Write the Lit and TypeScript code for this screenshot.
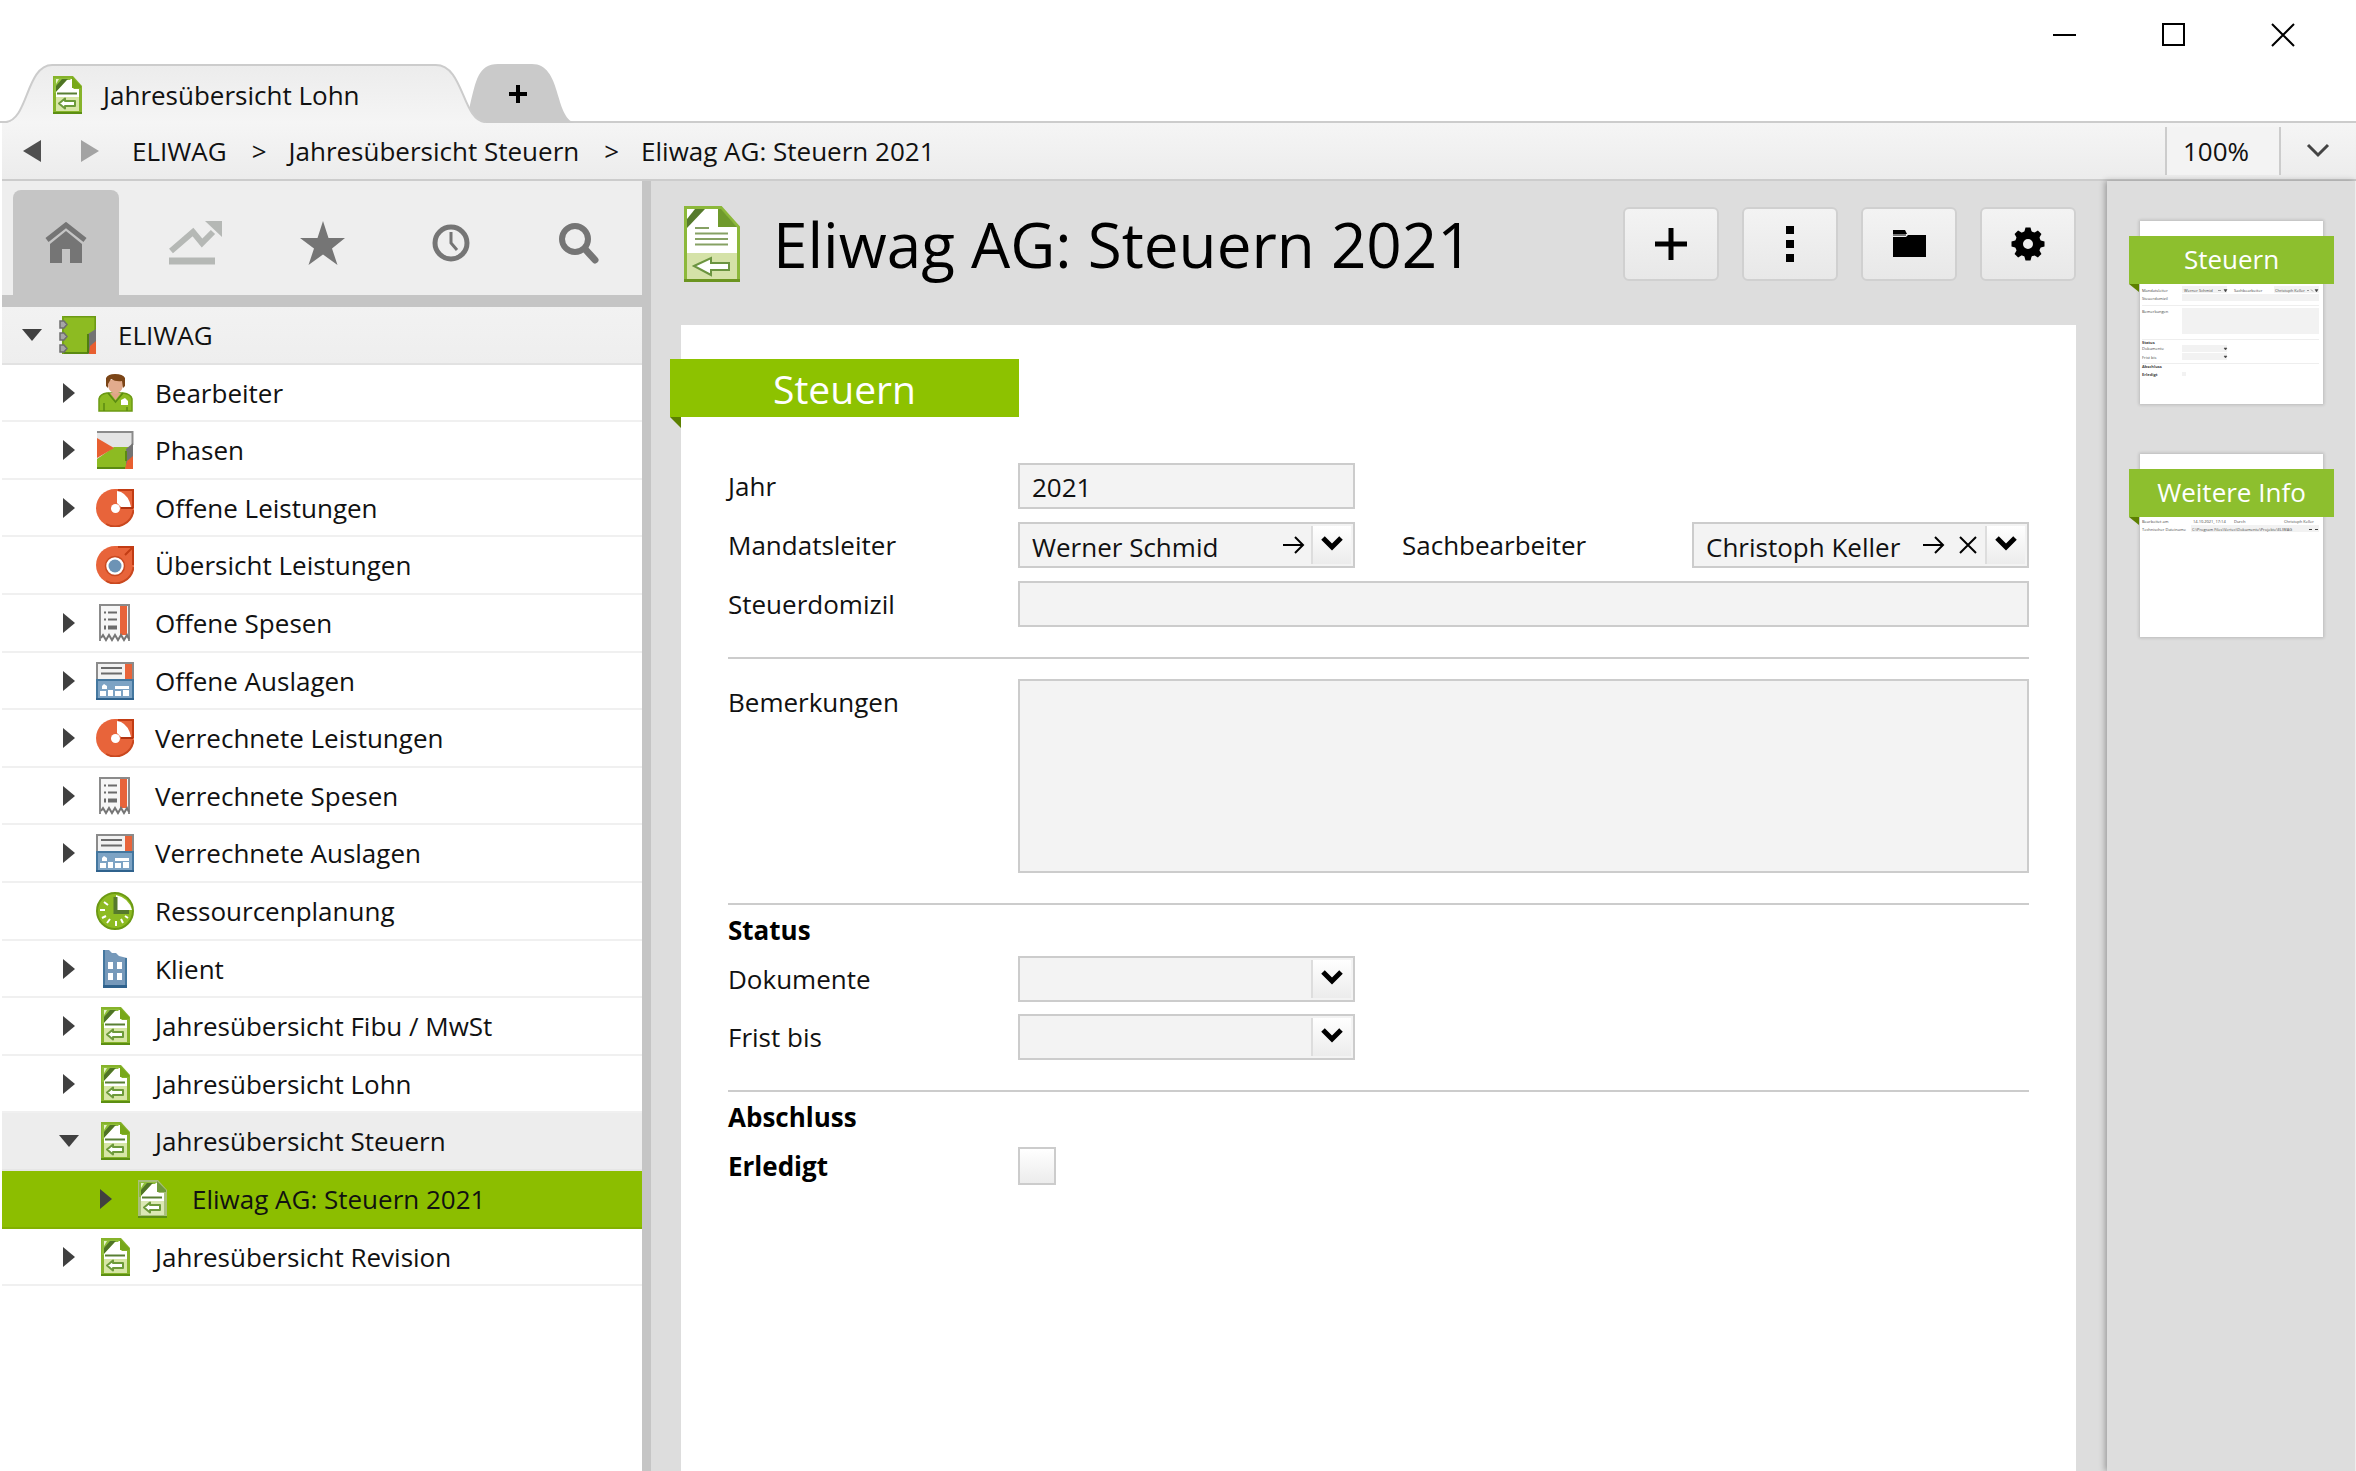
import { LitElement, html, css, svg, nothing } from "lit";
import type { TemplateResult } from "lit";
import { customElement, property, state } from "lit/decorators.js";
import { classMap } from "lit/directives/class-map.js";

type IconName =
  | "notebook" | "person" | "phases" | "pie" | "target" | "receipt"
  | "expense" | "clock" | "building" | "doc" | "docPale";

interface TreeNode {
  id: string;
  label: string;
  icon: IconName;
  level: number;
  arrow: "open" | "closed" | "none";
}

const smallDoc = (edge: string, fold: string, tint: string) => svg`
  <path d="M5 0H25L34 10V38H5Z" fill="${edge}"/>
  <path d="M8 3H24V11L26 13H31V35H8Z" fill="#fff"/>
  <path d="M8 21H31V35H8Z" fill="${tint}"/>
  <path d="M6 2H23V3L8 17H6Z" fill="#8fbf3a"/>
  <path d="M8 3H11L8 8Z" fill="#e6f2c8"/>
  <path d="M14 3H20L8 16V10Z" fill="#4f7426"/>
  <path d="M19 4H24V13H31V19H8V16Z" fill="#fff"/>
  <path d="M24 1L33 10V12H24Z" fill="${fold}"/>
  <path d="M9 17.500H29" stroke="#587f33" stroke-width="2"/>
  <path d="M11 27.500L17 22.500V25H27V30H17V32.500Z" fill="#fff" stroke="#6d9a3a" stroke-width="2" stroke-linejoin="round"/>
  <path d="M5 37H34" stroke="#5c8f12" stroke-width="2"/>`;

const ICONS: Record<IconName, TemplateResult> = {
  notebook: svg`
    <rect x="3" y="0" width="34" height="38" fill="#8dbb22"/>
    <path d="M3 .8H36.200V14" fill="none" stroke="#6c9a14" stroke-width="1.600"/>
    <path d="M4 37H30" stroke="#5b8a12" stroke-width="2"/>
    <path d="M4 0V38" stroke="#76a41a" stroke-width="2"/>
    <path d="M37 13L29 18V38H31L37 26Z" fill="#737373"/>
    <path d="M29 18V37" stroke="#4f7d10" stroke-width="2"/>
    <path d="M31 30L37 25V38H30Z" fill="#e85f30"/>
    <g fill="#a6a6a6" stroke="#6d6d6d" stroke-width="1.500">
      <path d="M1 5H5L8 8.500L5 12H1Z"/><path d="M1 17H5L8 20.500L5 24H1Z"/><path d="M1 29H5L8 32.500L5 36H1Z"/>
    </g>`,
  person: svg`
    <path d="M3 37V25Q4 20 11 19H27Q35 20 36 25V37Z" fill="#8dbb22" stroke="#6c9a14" stroke-width="1.500"/>
    <path d="M14 19L19.500 26L25 19Z" fill="#dfa587"/>
    <path d="M12 19L19.500 28L27 19" fill="none" stroke="#5b8a12" stroke-width="1.500"/>
    <path d="M8 29V37M31 33V37" stroke="#5b8a12" stroke-width="1.500"/>
    <path d="M12 6H27V12Q26 18 19.500 20Q13 18 12 12Z" fill="#e2ab8d"/>
    <path d="M10 12V4Q12 0 19 0Q27 0 29 4V12L27 14L26 7Q20 8 15 5L12 10V14Z" fill="#7b4517"/>
    <path d="M25 26L29 24L32 27V31H25Z" fill="#fff"/>`,
  phases: svg`
    <rect x="1" y="1" width="36" height="36" fill="#e4e4e4"/>
    <path d="M1 1H36.500V14" fill="none" stroke="#8b8b8b" stroke-width="2"/>
    <path d="M1 28L18 16H34V38H1Z" fill="#8dbb22"/>
    <path d="M1 7L18 17L1 27Z" fill="#e85f30"/>
    <path d="M37 12L30 18V38L37 26Z" fill="#737373"/>
    <path d="M31 30L37 25V38H29Z" fill="#e85f30"/>
    <path d="M1 37H29M30 20V30" stroke="#5b8a12" stroke-width="2"/>`,
  pie: svg`
    <path d="M19 0H38V19A19 19 0 1 1 19 0Z" fill="#e8643a"/>
    <path d="M22 1H37V19" fill="none" stroke="#c23c14" stroke-width="2"/>
    <path d="M37.500 21A18.500 18.500 0 0 1 10 35" fill="none" stroke="#c9481f" stroke-width="2"/>
    <path d="M21 2L25 3Q33 7 35 18H25L21 14Z" fill="#fff"/>
    <path d="M25 19H37" stroke="#b23410" stroke-width="2"/>
    <circle cx="19.500" cy="19.500" r="4.500" fill="#fff"/>`,
  target: svg`
    <path d="M19 0H38V19A19 19 0 1 1 19 0Z" fill="#e8643a"/>
    <path d="M22 1H37V19M29 9L36 2" fill="none" stroke="#c23c14" stroke-width="2"/>
    <path d="M37.500 21A18.500 18.500 0 0 1 10 35" fill="none" stroke="#c9481f" stroke-width="2"/>
    <circle cx="19" cy="20" r="9.500" fill="#fff" stroke="#c9481f" stroke-width="1.500"/>
    <circle cx="19" cy="20" r="6.500" fill="#6d93b5"/>`,
  receipt: svg`
    <path d="M4 1H33V37L30 32L27 37L24 32L21 37L18 32L15 37L12 32L9 37L6 32L4 37Z" fill="#f6f6f6"/>
    <path d="M4 37V1H33V37" fill="none" stroke="#8b8b8b" stroke-width="2"/>
    <path d="M24 2H31V31H24Z" fill="#e8643a"/>
    <path d="M5 34L7 31L10 36L13 31L16 36L19 31L22 36L25 31L28 36L31 31L33 35" fill="none" stroke="#757575" stroke-width="2"/>
    <path d="M8 8.500H10M12 8.500H21M8 15.500H10M12 15.500H21" stroke="#6b6b6b" stroke-width="2"/>
    <path d="M8 23.500H10M12 23.500H21" stroke="#6b6b6b" stroke-width="4"/>`,
  expense: svg`
    <rect x="1" y="1" width="36" height="17" fill="#f2f2f2" stroke="#8b8b8b" stroke-width="2"/>
    <rect x="29" y="2" width="7" height="15" fill="#e8643a"/>
    <path d="M5 6H26M5 11.500H26" stroke="#6b6b6b" stroke-width="2"/>
    <rect x="1" y="18" width="36" height="19" fill="#7da3c4" stroke="#44779f" stroke-width="2"/>
    <path d="M0 37H38" stroke="#2f628d" stroke-width="2"/>
    <path d="M6 24L8 22L11 24V27H6ZM19 24H33V27H19ZM4 29H10V34H4ZM12 28H17V34H12ZM19 29H25V34H19ZM27 28H33V34H27Z" fill="#fff"/>`,
  clock: svg`
    <circle cx="19" cy="19" r="18" fill="#8dbb22" stroke="#6c9a14" stroke-width="2"/>
    <path d="M20 3Q33 6 36 18H20Z" fill="#fff"/>
    <path d="M19.500 5V20H33" fill="none" stroke="#567a2c" stroke-width="4"/>
    <path d="M20 34V29M27 31L25 27M11 31L14 27M6 26L10 24M4 18H9M8 10L12 13M32 26L29 24" stroke="#fff" stroke-width="2"/>`,
  building: svg`
    <path d="M7 0H13L16 3L20 3L23 6L31 8V37H7Z" fill="#7699ba"/>
    <path d="M8 0V37M30 8V37" stroke="#44779f" stroke-width="2"/>
    <path d="M7 36.500H31" stroke="#2f628d" stroke-width="3"/>
    <path d="M12 12H17V19H12ZM21 12H26V19H21ZM12 23H17V30H12ZM21 23H26V30H21Z" fill="#fff"/>`,
  doc: smallDoc("#86b32a", "#78a81a", "#d7e6a6"),
  docPale: smallDoc("#a9bf7c", "#6f9a3a", "#dbe8b4"),
};

const TREE: TreeNode[] = [
  { id: "root", label: "ELIWAG", icon: "notebook", level: 0, arrow: "open" },
  { id: "bearbeiter", label: "Bearbeiter", icon: "person", level: 1, arrow: "closed" },
  { id: "phasen", label: "Phasen", icon: "phases", level: 1, arrow: "closed" },
  { id: "o-leist", label: "Offene Leistungen", icon: "pie", level: 1, arrow: "closed" },
  { id: "u-leist", label: "Übersicht Leistungen", icon: "target", level: 1, arrow: "none" },
  { id: "o-spesen", label: "Offene Spesen", icon: "receipt", level: 1, arrow: "closed" },
  { id: "o-ausl", label: "Offene Auslagen", icon: "expense", level: 1, arrow: "closed" },
  { id: "v-leist", label: "Verrechnete Leistungen", icon: "pie", level: 1, arrow: "closed" },
  { id: "v-spesen", label: "Verrechnete Spesen", icon: "receipt", level: 1, arrow: "closed" },
  { id: "v-ausl", label: "Verrechnete Auslagen", icon: "expense", level: 1, arrow: "closed" },
  { id: "ressourcen", label: "Ressourcenplanung", icon: "clock", level: 1, arrow: "none" },
  { id: "klient", label: "Klient", icon: "building", level: 1, arrow: "closed" },
  { id: "j-fibu", label: "Jahresübersicht Fibu / MwSt", icon: "doc", level: 1, arrow: "closed" },
  { id: "j-lohn", label: "Jahresübersicht Lohn", icon: "doc", level: 1, arrow: "closed" },
  { id: "j-steuern", label: "Jahresübersicht Steuern", icon: "doc", level: 1, arrow: "open" },
  { id: "steuern-2021", label: "Eliwag AG: Steuern 2021", icon: "docPale", level: 2, arrow: "closed" },
  { id: "j-revision", label: "Jahresübersicht Revision", icon: "doc", level: 1, arrow: "closed" },
];

const shared = css`
  :host {
    box-sizing: border-box;
    font-family: "Open Sans", "Noto Sans", "Liberation Sans", sans-serif;
    font-size: 26px;
    line-height: 38px;
    color: #111;
  }
  *, *::before, *::after { box-sizing: border-box; }
  button, input, select, textarea {
    margin: 0;
    padding: 0;
    border: 0;
    border-radius: 0;
    background: none;
    font: inherit;
    color: inherit;
  }
  button { display: flex; align-items: center; justify-content: center; }
  a { color: inherit; text-decoration: none; }
  svg { display: block; flex: none; }
`;

@customElement("app-titlebar")
export class AppTitlebar extends LitElement {
  static styles = [shared, css`
    :host { display: flex; justify-content: space-between; height: 123px; padding-left: 2px; background: #fff; border-bottom: 2px solid #ccc; }
    .tabs { display: flex; align-items: flex-end; }
    .tab { position: relative; display: flex; height: 60px; margin-bottom: -2px; }
    .shape { position: absolute; inset: 0; width: 100%; height: 100%; }
    .active { z-index: 1; width: 484px; }
    .active button { position: relative; gap: 17px; padding: 4px 0 0 46px; }
    .add { width: 112px; margin-left: -20px; }
    .add button { position: relative; width: 100%; padding: 2px 8px 0 0; }
    .win { display: flex; align-items: flex-start; padding-right: 19px; }
    .win button { width: 109px; height: 70px; }
  `];

  render() {
    return html`
      <div class="tabs">
        <div class="tab active">
          <svg class="shape" viewBox="0 0 482 60" preserveAspectRatio="none" aria-hidden="true">
            <defs><linearGradient id="tabfill" x1="0" y1="0" x2="0" y2="1"><stop offset="0" stop-color="#ececec"/><stop offset="1" stop-color="#f5f5f5"/></linearGradient></defs>
            <path d="M4 60C26 57 24 2 50 2H432C460 2 458 57 482 60Z" fill="url(#tabfill)"/>
            <path d="M0 59H4C26 57 24 2 50 2H432C460 2 458 57 481 59" fill="none" stroke="#ccc" stroke-width="2"/>
          </svg>
          <button type="button" aria-current="page">
            <svg width="38" height="38" viewBox="0 0 38 38" aria-hidden="true">${ICONS.doc}</svg>
            Jahresübersicht Lohn
          </button>
        </div>
        <div class="tab add">
          <svg class="shape" viewBox="0 0 112 60" preserveAspectRatio="none" aria-hidden="true">
            <path d="M0 60L4 42C10 18 12 1 32 1H66C96 1 88 54 109 60Z" fill="#cacaca"/>
          </svg>
          <button type="button" aria-label="Neuer Tab">
            <svg width="20" height="20" viewBox="0 0 20 20" aria-hidden="true"><path d="M10 1V19M1 10H19" stroke="#000" stroke-width="4"/></svg>
          </button>
        </div>
      </div>
      <div class="win">
        <button type="button" aria-label="Minimieren"><svg width="24" height="24" viewBox="0 0 24 24"><path d="M0 12H23" stroke="#000" stroke-width="2"/></svg></button>
        <button type="button" aria-label="Maximieren"><svg width="24" height="24" viewBox="0 0 24 24"><path d="M1 1H22V22H1Z" fill="none" stroke="#000" stroke-width="2"/></svg></button>
        <button type="button" aria-label="Schliessen"><svg width="24" height="24" viewBox="0 0 24 24"><path d="M1 1L23 23M23 1L1 23" stroke="#000" stroke-width="2"/></svg></button>
      </div>`;
  }
}

@customElement("app-breadcrumb")
export class AppBreadcrumb extends LitElement {
  static styles = [shared, css`
    :host { display: flex; align-items: center; height: 58px; margin-left: 2px; background: linear-gradient(#f5f5f5, #ececec); border-bottom: 2px solid #ccc; }
    .arrow { width: 58px; height: 56px; }
    .trail { display: flex; flex: 1; gap: 25px; margin: 0; padding: 0 0 0 14px; list-style: none; }
    .trail li { display: flex; gap: 22px; }
    .zoom { width: 116px; height: 48px; padding-left: 16px; background: #f3f3f3; border: solid #ccc; border-width: 0 2px; }
    .more { width: 75px; height: 56px; padding-right: 2px; }
  `];

  render() {
    const trail = ["ELIWAG", "Jahresübersicht Steuern", "Eliwag AG: Steuern 2021"];
    return html`
      <button class="arrow" type="button" aria-label="Zurück"><svg width="20" height="24" viewBox="0 0 20 24"><path d="M20 1V23L2 12Z" fill="#505050"/></svg></button>
      <button class="arrow" type="button" aria-label="Vorwärts"><svg width="20" height="24" viewBox="0 0 20 24"><path d="M2 1V23L20 12Z" fill="#a3a3a3"/></svg></button>
      <ol class="trail">
        ${trail.map((t, i) => html`<li>${i ? html`<span aria-hidden="true">&gt;</span>` : nothing}<a href="#">${t}</a></li>`)}
      </ol>
      <input class="zoom" type="text" aria-label="Zoom" .value=${"100%"} />
      <button class="more" type="button" aria-label="Zoomstufe wählen"><svg width="24" height="18" viewBox="0 0 24 18"><path d="M2 3L12 13L22 3" fill="none" stroke="#444" stroke-width="3"/></svg></button>`;
  }
}

@customElement("app-sidebar")
export class AppSidebar extends LitElement {
  @state() private selected = "steuern-2021";

  static styles = [shared, css`
    :host { display: block; background: #fff; }
    .tools { display: grid; grid-template-columns: repeat(5, 1fr); justify-items: center; height: 126px; padding-top: 9px; background: #eee; border-bottom: 12px solid #c5c5c5; }
    .tools button { width: 106px; height: 105px; border-radius: 8px 8px 0 0; }
    .tools .on { background: #c5c5c5; }
    .tree { display: grid; grid-auto-rows: 58px 57px 58px 57px 58px; margin: 0; padding: 0; list-style: none; }
    .row { display: flex; align-items: center; padding: 0 11px; border-bottom: 2px solid #f0f0f0; }
    .row.l1 { padding-left: 48px; }
    .row.l2 { padding-left: 85px; }
    .row.l0 { background: linear-gradient(#f2f2f2, #eee); border-color: #e2e2e2; }
    .row.path { background: #ededed; border-color: #e6e6e6; }
    .row.sel { background: #8cbe00; border-color: #82b000; }
    .twist { width: 38px; height: 38px; margin-right: 8px; }
    .item { display: flex; flex: 1; align-items: center; gap: 21px; }
  `];

  private twist(n: TreeNode) {
    if (n.arrow === "none") return html`<span class="twist"></span>`;
    const shape = n.arrow === "open" ? svg`<path d="M0 5H20L10 17Z"/>` : svg`<path d="M4 1L16 11L4 21Z"/>`;
    return html`<button class="twist" type="button" aria-label="${n.label} auf- oder zuklappen"><svg width="20" height="22" viewBox="0 0 20 22" fill="#404040">${shape}</svg></button>`;
  }

  render() {
    return html`
      <div class="tools">
        <button class="on" type="button" aria-label="Start">
          <svg width="42" height="42" viewBox="0 0 42 42" fill="#757575"><path d="M2 18L21 3L40 18" fill="none" stroke="#757575" stroke-width="5"/><path d="M21 9L37 22V41H25V27H17V41H5V22Z"/></svg>
        </button>
        <button type="button" aria-label="Auswertung">
          <svg width="56" height="46" viewBox="0 0 56 46"><path d="M5 31L27 12L36 23L47 12" fill="none" stroke="#b5b8b5" stroke-width="6"/><path d="M39 1H56V17Z" fill="#b5b8b5"/><path d="M3 41H49" stroke="#b5b8b5" stroke-width="7"/></svg>
        </button>
        <button type="button" aria-label="Favoriten">
          <svg width="46" height="44" viewBox="0 0 46 44"><path d="M24 0L29.500 17H46L33 27.500L38.500 44L24 33.500L9.500 44L15 27.500L1 17H18.500Z" fill="#757575"/></svg>
        </button>
        <button type="button" aria-label="Verlauf">
          <svg width="40" height="40" viewBox="0 0 40 40" fill="none" stroke="#757575"><circle cx="21" cy="20" r="16" stroke-width="5"/><path d="M21 9V20L27 27" stroke-width="3"/></svg>
        </button>
        <button type="button" aria-label="Suchen">
          <svg width="42" height="42" viewBox="0 0 42 42" fill="none" stroke="#757575"><circle cx="18" cy="17" r="13" stroke-width="6"/><path d="M28 27L38 38" stroke-width="7" stroke-linecap="round"/></svg>
        </button>
      </div>
      <ul class="tree">
        ${TREE.map((n) => html`
          <li class=${classMap({ row: true, [`l${n.level}`]: true, path: n.id === "j-steuern", sel: n.id === this.selected })}>
            ${this.twist(n)}
            <a class="item" href="#${n.id}" @click=${() => (this.selected = n.id)}>
              <svg width="38" height="38" viewBox="0 0 38 38" aria-hidden="true">${ICONS[n.icon]}</svg>${n.label}
            </a>
          </li>`)}
      </ul>`;
  }
}

@customElement("app-combo")
export class AppCombo extends LitElement {
  @property() label = "";
  @property() value = "";
  @property({ type: Boolean }) link = false;
  @property({ type: Boolean }) clearable = false;

  static styles = [shared, css`
    :host { display: grid; grid-template-columns: 290px minmax(0, 1fr); align-items: center; }
    .box { display: flex; height: 46px; padding: 2px; background: #f3f3f3; border: 2px solid #ccc; }
    select { flex: 1; min-width: 0; padding: 2px 0 0 10px; appearance: none; }
    .act { width: 34px; }
    .act:last-of-type { margin-right: 4px; }
    .drop { width: 40px; padding-bottom: 4px; background: linear-gradient(#fff, #ececec); border-left: 2px solid #ddd; }
  `];

  render() {
    return html`
      <label for="f">${this.label}</label>
      <div class="box">
        <select id="f"><option>${this.value}</option></select>
        ${this.link ? html`<button class="act" type="button" aria-label="${this.label} öffnen"><svg width="22" height="20" viewBox="0 0 22 20"><path d="M0 10H20M12 2L20 10L12 18" fill="none" stroke="#000" stroke-width="2"/></svg></button>` : nothing}
        ${this.clearable ? html`<button class="act" type="button" aria-label="${this.label} leeren"><svg width="18" height="18" viewBox="0 0 18 18"><path d="M1 1L17 17M17 1L1 17" stroke="#000" stroke-width="2"/></svg></button>` : nothing}
        <button class="drop" type="button" aria-label="${this.label} auswählen"><svg width="22" height="16" viewBox="0 0 22 16"><path d="M2 3L11 12L20 3" fill="none" stroke="#000" stroke-width="5"/></svg></button>
      </div>`;
  }
}

@customElement("app-record")
export class AppRecord extends LitElement {
  static styles = [shared, css`
    :host { display: flex; flex-direction: column; padding: 0 31px 0 30px; background: #ddd; }
    .head { display: flex; align-items: center; gap: 23px; height: 144px; padding-bottom: 18px; }
    .title { display: flex; flex: 1; align-items: center; gap: 33px; padding-left: 3px; }
    h1 { margin: 0; font-size: 62px; line-height: 84px; font-weight: 400; color: #000; }
    .head button { width: 96px; height: 74px; background: linear-gradient(#f3f3f3, #e8e8e8); border: 2px solid #d0d0d0; border-radius: 6px; }
    .sheet { flex: 1; padding: 34px 47px 48px; background: #fff; }
    .ribbon { position: relative; width: 349px; height: 58px; margin: 0 0 46px -58px; background: #8dc200; color: #fff; font-size: 39px; line-height: 60px; font-weight: 400; text-align: center; }
    .ribbon::after { content: ""; position: absolute; left: 0; top: 100%; border: solid transparent; border-width: 0 11px 11px 0; border-right-color: #5c8000; }
    section { display: grid; grid-template-columns: repeat(2, minmax(0, 1fr)); gap: 13px 47px; }
    section + section { margin-top: 30px; padding-top: 20px; border-top: 2px solid #ccc; }
    section.titled { padding-top: 6px; row-gap: 7px; }
    .stack { display: grid; gap: 12px; }
    .field { display: grid; grid-template-columns: 290px minmax(0, 1fr); align-items: center; min-height: 46px; }
    .wide { grid-column: 1 / -1; }
    .top { align-items: start; }
    .top label { padding-top: 4px; }
    h3 { grid-column: 1 / -1; margin: 0; font-size: 26px; line-height: 38px; font-weight: 700; color: #000; }
    .strong { font-weight: 700; color: #000; }
    .text { width: 100%; height: 46px; padding: 2px 12px 0; background: #f3f3f3; border: 2px solid #ccc; }
    textarea.text { display: block; height: 194px; resize: none; }
    .check { appearance: none; width: 38px; height: 38px; background: linear-gradient(#fff, #ececec); border: 2px solid #ccc; }
  `];

  render() {
    return html`
      <header class="head">
        <div class="title">
          <svg width="56" height="76" viewBox="0 0 56 76" aria-hidden="true">
            <path d="M1.500 1.500H37L54.500 21V74H1.500Z" fill="#fff" stroke="#8cb83a" stroke-width="3"/>
            <path d="M3 47H53V73H3Z" fill="#d5e2a8"/>
            <path d="M11 3H21L3 22V13Z" fill="#567a2c"/>
            <path d="M34 3H37L53 21H34Z" fill="#6f9a2c"/>
            <path d="M11 22H25M11 27.500H44M11 33H44M11 38.500H44" stroke="#86a164" stroke-width="2"/>
            <path d="M10 60L27 52V57H45V64H27V69Z" fill="#fff" stroke="#6b9440" stroke-width="2"/>
            <path d="M0 74.500H56" stroke="#6b9420" stroke-width="3"/>
          </svg>
          <h1>Eliwag AG: Steuern 2021</h1>
        </div>
        <button type="button" aria-label="Neu"><svg width="34" height="34" viewBox="0 0 34 34"><path d="M17 1V33M1 17H33" stroke="#000" stroke-width="5"/></svg></button>
        <button type="button" aria-label="Aktionen"><svg width="8" height="38" viewBox="0 0 8 38"><path d="M0 1H8V9H0ZM0 15H8V23H0ZM0 29H8V37H0Z"/></svg></button>
        <button type="button" aria-label="Ordner"><svg width="34" height="34" viewBox="0 0 34 34"><path d="M1 3H13L15 7H1Z"/><path d="M1 7H14V9H1Z" fill="#777"/><path d="M1 10H14L16 8H34V30H1Z"/></svg></button>
        <button type="button" aria-label="Einstellungen"><svg width="34" height="34" viewBox="0 0 34 34">
          <circle cx="17" cy="17" r="9" fill="none" stroke="#000" stroke-width="8"/>
          ${[0, 45, 90, 135, 180, 225, 270, 315].map((a) => svg`<path d="M13 6L14.500 .5H19.500L21 6Z" transform="rotate(${a} 17 17)"/>`)}
        </svg></button>
      </header>
      <main class="sheet">
        <h2 class="ribbon">Steuern</h2>
        <section>
          <div class="field"><label for="jahr">Jahr</label><input id="jahr" class="text" type="text" .value=${"2021"} /></div>
          <span></span>
          <app-combo label="Mandatsleiter" value="Werner Schmid" link></app-combo>
          <app-combo label="Sachbearbeiter" value="Christoph Keller" link clearable></app-combo>
          <div class="field wide"><label for="domizil">Steuerdomizil</label><input id="domizil" class="text" type="text" /></div>
        </section>
        <section>
          <div class="field wide top"><label for="bem">Bemerkungen</label><textarea id="bem" class="text"></textarea></div>
        </section>
        <section class="titled">
          <h3>Status</h3>
          <div class="stack">
            <app-combo label="Dokumente"></app-combo>
            <app-combo label="Frist bis"></app-combo>
          </div>
        </section>
        <section class="titled">
          <h3>Abschluss</h3>
          <div class="field"><label class="strong" for="erledigt">Erledigt</label><input id="erledigt" class="check" type="checkbox" /></div>
        </section>
      </main>`;
  }
}

@customElement("app-pages")
export class AppPages extends LitElement {
  static styles = [shared, css`
    :host { display: flex; flex-direction: column; gap: 50px; padding: 40px 32px 40px 33px; background: #ddd; box-shadow: -2px 0 6px rgba(0, 0, 0, 0.3); border-right: 1px solid #eee; }
    .page { display: block; height: 183px; padding-top: 15px; background: #fff; box-shadow: 0 0 3px 1px rgba(0, 0, 0, 0.16); }
    .name { position: relative; display: block; height: 48px; margin: 0 -11px; background: #8dbf2e; color: #fff; line-height: 47px; text-align: center; }
    .name::after { content: ""; position: absolute; left: 0; top: 100%; border: solid transparent; border-width: 0 10px 8px 0; border-right-color: #5c8000; }
    .mini { width: 100%; height: 119px; font-size: 4px; fill: #444; }
    .bold { font-weight: 700; }
  `];

  render() {
    return html`
      <a class="page" href="#steuern">
        <span class="name">Steuern</span>
        <svg class="mini" viewBox="0 0 183 119" aria-hidden="true">
          <path d="M42 2H87V9H42ZM134 2H179V9H134ZM42 10H179V17H42ZM42 24H179V50H42ZM42 61H87V68H42ZM42 69H87V76H42ZM42 88H46V92H42Z" fill="#f2f2f2"/>
          <path d="M2 21.500H179M2 55.500H179M2 79.500H179" stroke="#eee"/>
          <text x="2" y="8">Mandatsleiter</text><text x="44" y="8">Werner Schmid</text><text x="94" y="8">Sachbearbeiter</text><text x="135" y="8">Christoph Keller</text>
          <path d="M78 6.500H81M84 5.500H87L85.500 8ZM167 6.500H169M171 5.500L173 7.500M175 5.500H178L176.500 8ZM84 64H87L85.500 66ZM84 72H87L85.500 74Z" stroke="#444" stroke-width=".5"/>
          <text x="2" y="16">Steuerdomizil</text><text x="2" y="29">Bemerkungen</text>
          <text class="bold" x="2" y="60">Status</text><text x="2" y="66">Dokumente</text><text x="2" y="75">Frist bis</text>
          <text class="bold" x="2" y="84">Abschluss</text><text class="bold" x="2" y="92">Erledigt</text>
        </svg>
      </a>
      <a class="page" href="#weitere-info">
        <span class="name">Weitere Info</span>
        <svg class="mini" viewBox="0 0 183 119" aria-hidden="true">
          <path d="M51 8H179V15H51Z" fill="#f2f2f2"/>
          <text x="2" y="6">Bearbeitet am</text><text x="53" y="6">14.10.2021, 17:14</text><text x="94" y="6">Durch</text><text x="144" y="6">Christoph Keller</text>
          <text x="2" y="14">Technischer Dateiname</text><text x="52" y="14">C:\\Program Files\\Vertec\\Dokumente\\Projekte\\ELIWAG</text>
          <path d="M169 12.500H172M175 12.500H178" stroke="#444"/>
        </svg>
      </a>`;
  }
}

@customElement("app-root")
export class AppRoot extends LitElement {
  static styles = css`
    :host { display: flex; flex-direction: column; min-height: 100vh; background: #fff; }
    .body { display: flex; flex: 1; padding-left: 2px; }
    .side { flex: none; width: 640px; }
    .split { flex: none; width: 9px; background: #c5c5c5; }
    .record { flex: 1; min-width: 0; }
    .pages { flex: none; width: 249px; }
  `;

  render() {
    return html`
      <app-titlebar></app-titlebar>
      <app-breadcrumb></app-breadcrumb>
      <div class="body">
        <app-sidebar class="side"></app-sidebar>
        <div class="split"></div>
        <app-record class="record"></app-record>
        <app-pages class="pages"></app-pages>
      </div>`;
  }
}
